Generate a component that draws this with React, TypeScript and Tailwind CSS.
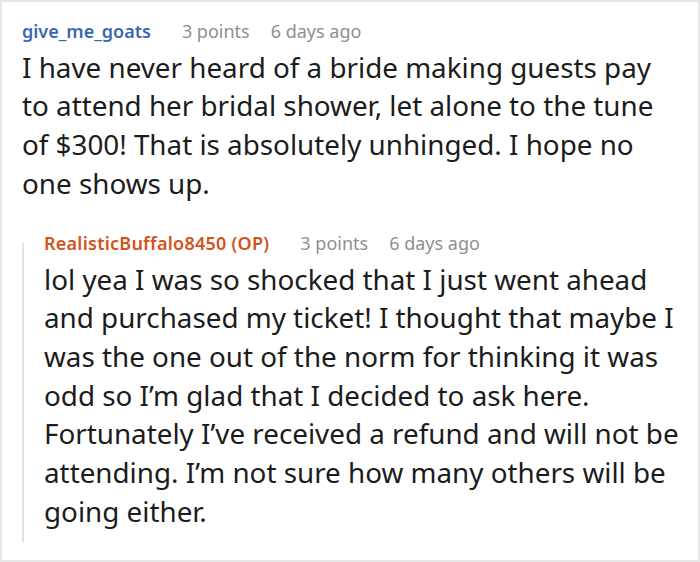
const font = { fontFamily: '"Noto Sans", "Open Sans", sans-serif' };

const TOP_LINES = [
  "I have never heard of a bride making guests pay",
  "to attend her bridal shower, let alone to the tune",
  "of $300! That is absolutely unhinged. I hope no",
  "one shows up.",
];

const REPLY_LINES = [
  "lol yea I was so shocked that I just went ahead",
  "and purchased my ticket! I thought that maybe I",
  "was the one out of the norm for thinking it was",
  "odd so I’m glad that I decided to ask here.",
  "Fortunately I’ve received a refund and will not be",
  "attending. I’m not sure how many others will be",
  "going either.",
];

function CommentHeader({
  author,
  authorClass,
  points,
  age,
}: {
  author: string;
  authorClass: string;
  points: string;
  age: string;
}) {
  return (
    <div className="flex items-baseline text-[18px] leading-6">
      <span className={`font-semibold ${authorClass}`}>{author}</span>
      <span className="ml-[31px] text-[#8f8f8f]">{points}</span>
      <span className="ml-[21px] text-[#8f8f8f]">{age}</span>
    </div>
  );
}

function Body({ lines }: { lines: string[] }) {
  return (
    <p className="mt-[4.6px] text-[27.8px] leading-[38.7px]">
      {lines.map((line) => (
        <span key={line} className="block whitespace-nowrap">
          {line}
        </span>
      ))}
    </p>
  );
}

export default function App() {
  return (
    <div
      className="h-[562px] w-[700px] overflow-hidden border-2 border-[#e6e6e6] bg-white text-[#1c1c1c]"
      style={font}
    >
      <div className="pl-[20px] pr-2 pt-[17px]">
        <CommentHeader
          author="give_me_goats"
          authorClass="text-[#3a68b0]"
          points="3 points"
          age="6 days ago"
        />
        <Body lines={TOP_LINES} />

        <div className="mt-[28.5px] flex">
          <div className="mt-[12px] w-[2px] shrink-0 bg-[#e2e2e2]" />
          <div className="pb-[12px] pl-[20px]">
            <CommentHeader
              author="RealisticBuffalo8450 (OP)"
              authorClass="text-[#d4531c] tracking-[0.24px]"
              points="3 points"
              age="6 days ago"
            />
            <Body lines={REPLY_LINES} />
          </div>
        </div>
      </div>
    </div>
  );
}
